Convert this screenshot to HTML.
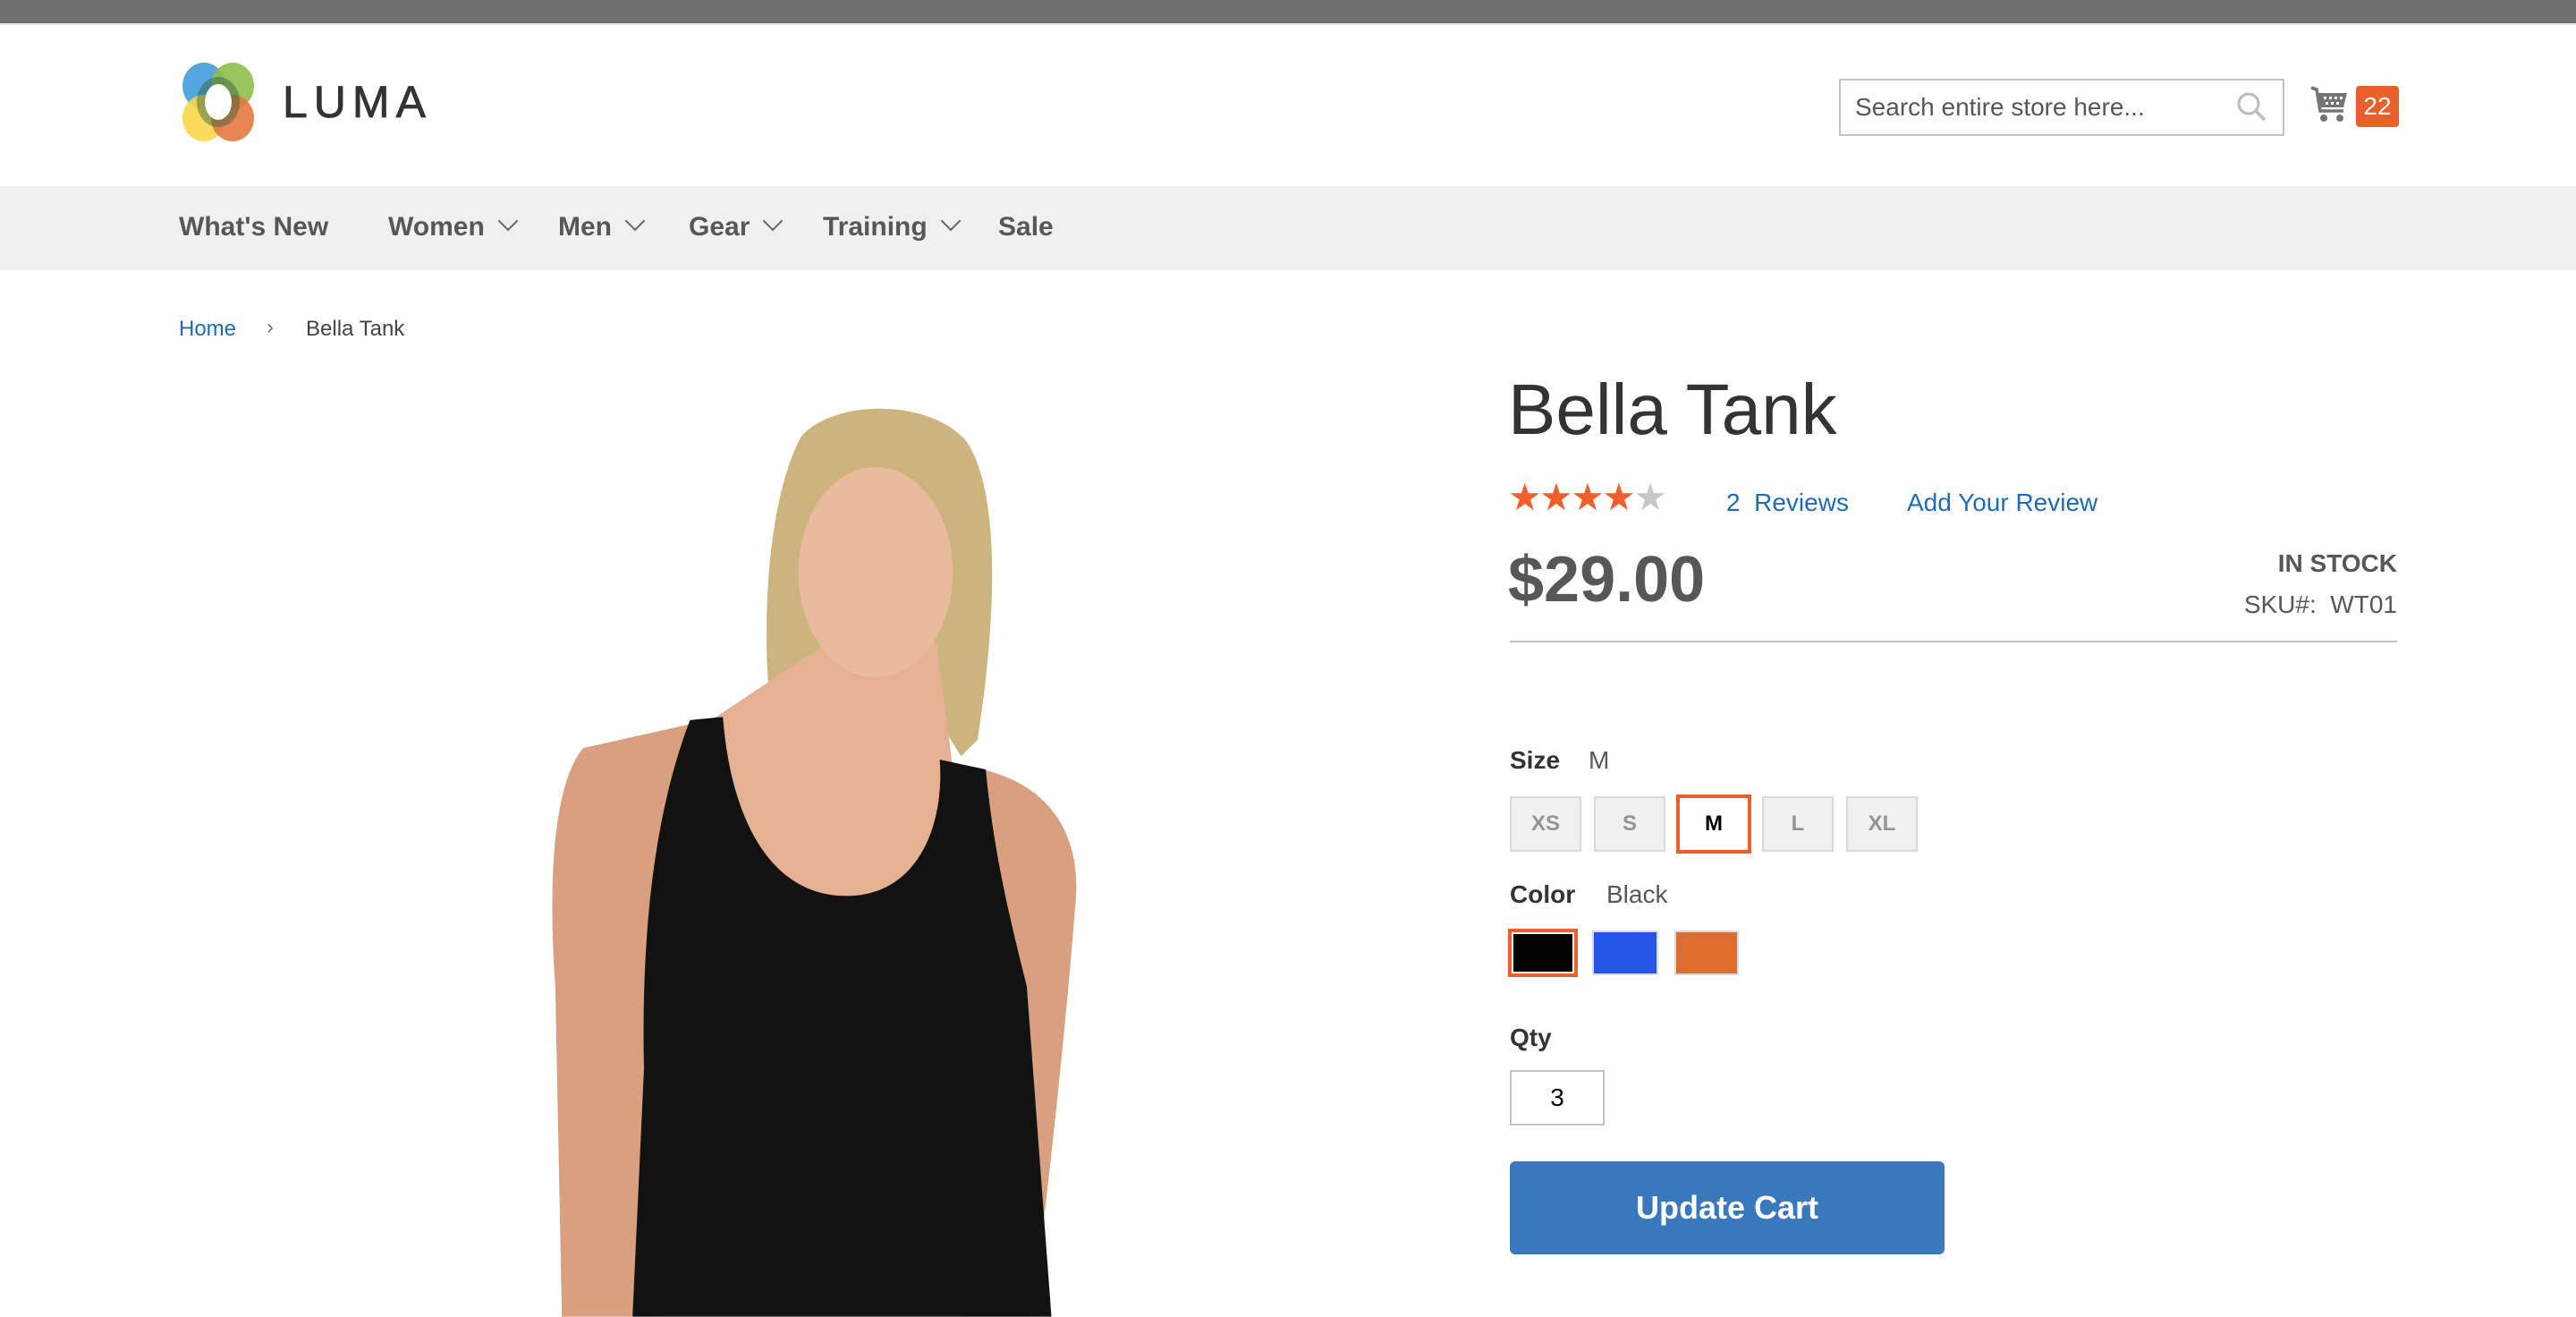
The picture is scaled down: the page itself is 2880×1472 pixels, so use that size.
<!DOCTYPE html>
<html><head><meta charset="utf-8"><style>
*{margin:0;padding:0;box-sizing:border-box}
html,body{width:2880px;height:1472px;overflow:hidden;background:#fff}
#p{zoom:2;width:1440px;height:736px;position:relative;font-family:"Liberation Sans",sans-serif;color:#333}
.a{position:absolute;white-space:nowrap}
.nav{font-weight:bold;font-size:15px;color:#575757;top:118px;line-height:18px}
.chev{display:inline-block;width:8px;height:8px;border-right:1.3px solid #666;border-bottom:1.3px solid #666;transform:rotate(45deg);margin-left:9px;position:relative;top:-4px}
.sw{position:absolute;top:445px;height:31px;width:40px;background:#f0f0f0;border:1px solid #dadada;font-weight:bold;font-size:12px;color:#949494;text-align:center;line-height:29px}
.lbl{font-weight:bold;font-size:14px;color:#333}
</style></head><body><div id="p">
<div class="a" style="left:0;top:0;width:1440px;height:13px;background:#6e716e"></div>
<div class="a" style="left:0;top:13px;width:1440px;height:1px;background:#e8e8e8"></div>
<svg class="a" style="left:100px;top:35px" width="46" height="45" viewBox="0 0 46 45">
<g style="mix-blend-mode:multiply">
<ellipse cx="14" cy="13" rx="12" ry="13" fill="#4aa3dd" opacity=".95"/>
<ellipse cx="30" cy="13" rx="12" ry="13" fill="#8fbe4c" opacity=".9"/>
<ellipse cx="14" cy="31" rx="12" ry="13" fill="#f8d84a" opacity=".9"/>
<ellipse cx="30" cy="31" rx="12" ry="13" fill="#e5783f" opacity=".9"/>
</g>
<ellipse cx="22" cy="22" rx="12" ry="14" fill="#2f5e3c" opacity=".45"/>
<ellipse cx="22" cy="22" rx="7.5" ry="10" fill="#fff"/>
</svg>
<div class="a" style="left:158px;top:42px;font-size:25px;letter-spacing:3.5px;color:#333;line-height:30px;-webkit-text-stroke:0.4px #333">LUMA</div>
<div class="a" style="left:1028px;top:44px;width:249px;height:32px;border:1px solid #c2c2c2;background:#fff"></div>
<div class="a" style="left:1037px;top:51px;font-size:14px;color:#575757;line-height:18px">Search entire store here...</div>
<svg class="a" style="left:1250px;top:51px" width="18" height="18" viewBox="0 0 18 18"><circle cx="7" cy="7" r="5.5" fill="none" stroke="#bdbdbd" stroke-width="1.6"/><line x1="11" y1="11" x2="16" y2="16" stroke="#bdbdbd" stroke-width="1.8"/></svg>
<svg class="a" style="left:1291px;top:47px" width="22" height="22" viewBox="0 0 22 22"><path d="M1 2 L4 3 L6 15 L19 15" fill="none" stroke="#757575" stroke-width="1.8"/><path d="M5 5 L21 5 L19 13 L6.5 13 Z" fill="#757575"/><g fill="#fff"><rect x="8" y="7" width="1.5" height="1.5"/><rect x="11" y="7" width="1.5" height="1.5"/><rect x="14" y="7" width="1.5" height="1.5"/><rect x="17" y="7" width="1.5" height="1.5"/><rect x="9" y="10" width="1.5" height="1.5"/><rect x="12" y="10" width="1.5" height="1.5"/><rect x="15" y="10" width="1.5" height="1.5"/></g><circle cx="8" cy="19" r="2" fill="#757575"/><circle cx="17" cy="19" r="2" fill="#757575"/></svg>
<div class="a" style="left:1317px;top:48px;width:24px;height:23px;background:#e8602a;border-radius:2px;color:#fff;font-size:14px;text-align:center;line-height:23px">22</div>
<div class="a" style="left:0;top:104px;width:1440px;height:47px;background:#f0f0f0"></div>
<div class="a nav" style="left:100px">What's New</div>
<div class="a nav" style="left:217px">Women<span class="chev"></span></div>
<div class="a nav" style="left:312px">Men<span class="chev"></span></div>
<div class="a nav" style="left:385px">Gear<span class="chev"></span></div>
<div class="a nav" style="left:460px">Training<span class="chev"></span></div>
<div class="a nav" style="left:558px">Sale</div>
<div class="a" style="left:100px;top:176px;font-size:12px;color:#1f6bb5;line-height:16px">Home</div>
<div class="a" style="left:149px;top:175px;font-size:12px;color:#777;line-height:16px">&#8250;</div>
<div class="a" style="left:171px;top:176px;font-size:12px;color:#444;line-height:16px">Bella Tank</div>
<svg class="a" style="left:0;top:0" width="1440" height="736" viewBox="0 0 1568 801">
<path d="M470,440 C462,380 468,300 488,265 C508,243 565,242 588,268 C610,300 606,380 595,450 L585,460 L560,420 L500,420 Z" fill="#cdb47f"/>
<path d="M355,455 C338,475 333,530 338,600 L342,801 L398,801 L402,560 L422,440 Z" fill="#d8a07e"/>
<path d="M598,468 C640,478 657,508 655,545 C650,610 640,710 628,801 L585,801 L610,600 Z" fill="#d8a07e"/>
<path d="M505,390 L570,390 L580,468 L600,470 L595,580 L435,580 L430,440 Z" fill="#e4b193"/>
<ellipse cx="533" cy="348" rx="47" ry="64" fill="#e9bb9c"/>
<path d="M490,280 C512,252 565,252 585,290 C560,272 522,272 490,305 Z" fill="#cdb47f"/>
<path d="M420,438 L440,436 C445,500 470,545 515,545 C560,545 575,500 572,462 L600,468 C605,520 615,560 625,600 L640,801 L385,801 L392,650 C390,560 400,490 420,438 Z" fill="#121212"/>
</svg>
<div class="a" style="left:843px;top:204px;font-size:40px;color:#333;line-height:50px">Bella Tank</div>
<div class="a" style="left:843px;top:266px;font-size:21px;letter-spacing:-1.3px;line-height:24px"><span style="color:#ef5f2b">&#9733;&#9733;&#9733;&#9733;</span><span style="color:#c7c7c7">&#9733;</span></div>
<div class="a" style="left:965px;top:272px;font-size:14px;color:#1f6bb5;line-height:18px">2 &nbsp;Reviews</div>
<div class="a" style="left:1066px;top:272px;font-size:14px;color:#1f6bb5;line-height:18px">Add Your Review</div>
<div class="a" style="left:843px;top:302px;font-size:36px;font-weight:bold;color:#575757;line-height:44px">$29.00</div>
<div class="a" style="left:1240px;top:306px;width:100px;text-align:right;font-size:14px;font-weight:bold;color:#575757;line-height:18px">IN STOCK</div>
<div class="a" style="left:1240px;top:329px;width:100px;text-align:right;font-size:14px;color:#575757;line-height:18px">SKU#: &nbsp;WT01</div>
<div class="a" style="left:844px;top:358px;width:496px;height:1px;background:#c1c1c1"></div>
<div class="a lbl" style="left:844px;top:416px;line-height:18px">Size</div>
<div class="a" style="left:888px;top:416px;font-size:14px;color:#575757;line-height:18px">M</div>
<div class="sw" style="left:844px">XS</div>
<div class="sw" style="left:891px">S</div>
<div class="sw" style="left:937px;width:42px;top:444px;height:33px;background:#fff;border:2px solid #ef5f2b;color:#000;line-height:29px">M</div>
<div class="sw" style="left:985px">L</div>
<div class="sw" style="left:1032px">XL</div>
<div class="a lbl" style="left:844px;top:491px;line-height:18px">Color</div>
<div class="a" style="left:898px;top:491px;font-size:14px;color:#575757;line-height:18px">Black</div>
<div class="a" style="left:843px;top:519px;width:39px;height:27px;border:2px solid #ef5f2b;background:#000;box-shadow:inset 0 0 0 1px #fff"></div>
<div class="a" style="left:890px;top:520px;width:37px;height:25px;background:#2456e8;border:1px solid #dadada"></div>
<div class="a" style="left:936px;top:520px;width:36px;height:25px;background:#dc6d2c;border:1px solid #dadada"></div>
<div class="a lbl" style="left:844px;top:571px;line-height:18px">Qty</div>
<div class="a" style="left:844px;top:598px;width:53px;height:31px;border:1px solid #c2c2c2;text-align:center;font-size:14px;color:#000;line-height:29px">3</div>
<div class="a" style="left:844px;top:649px;width:243px;height:52px;background:#3a78bd;border-radius:3px;color:#fff;font-weight:bold;font-size:18px;text-align:center;line-height:52px">Update Cart</div>
</div></body></html>
